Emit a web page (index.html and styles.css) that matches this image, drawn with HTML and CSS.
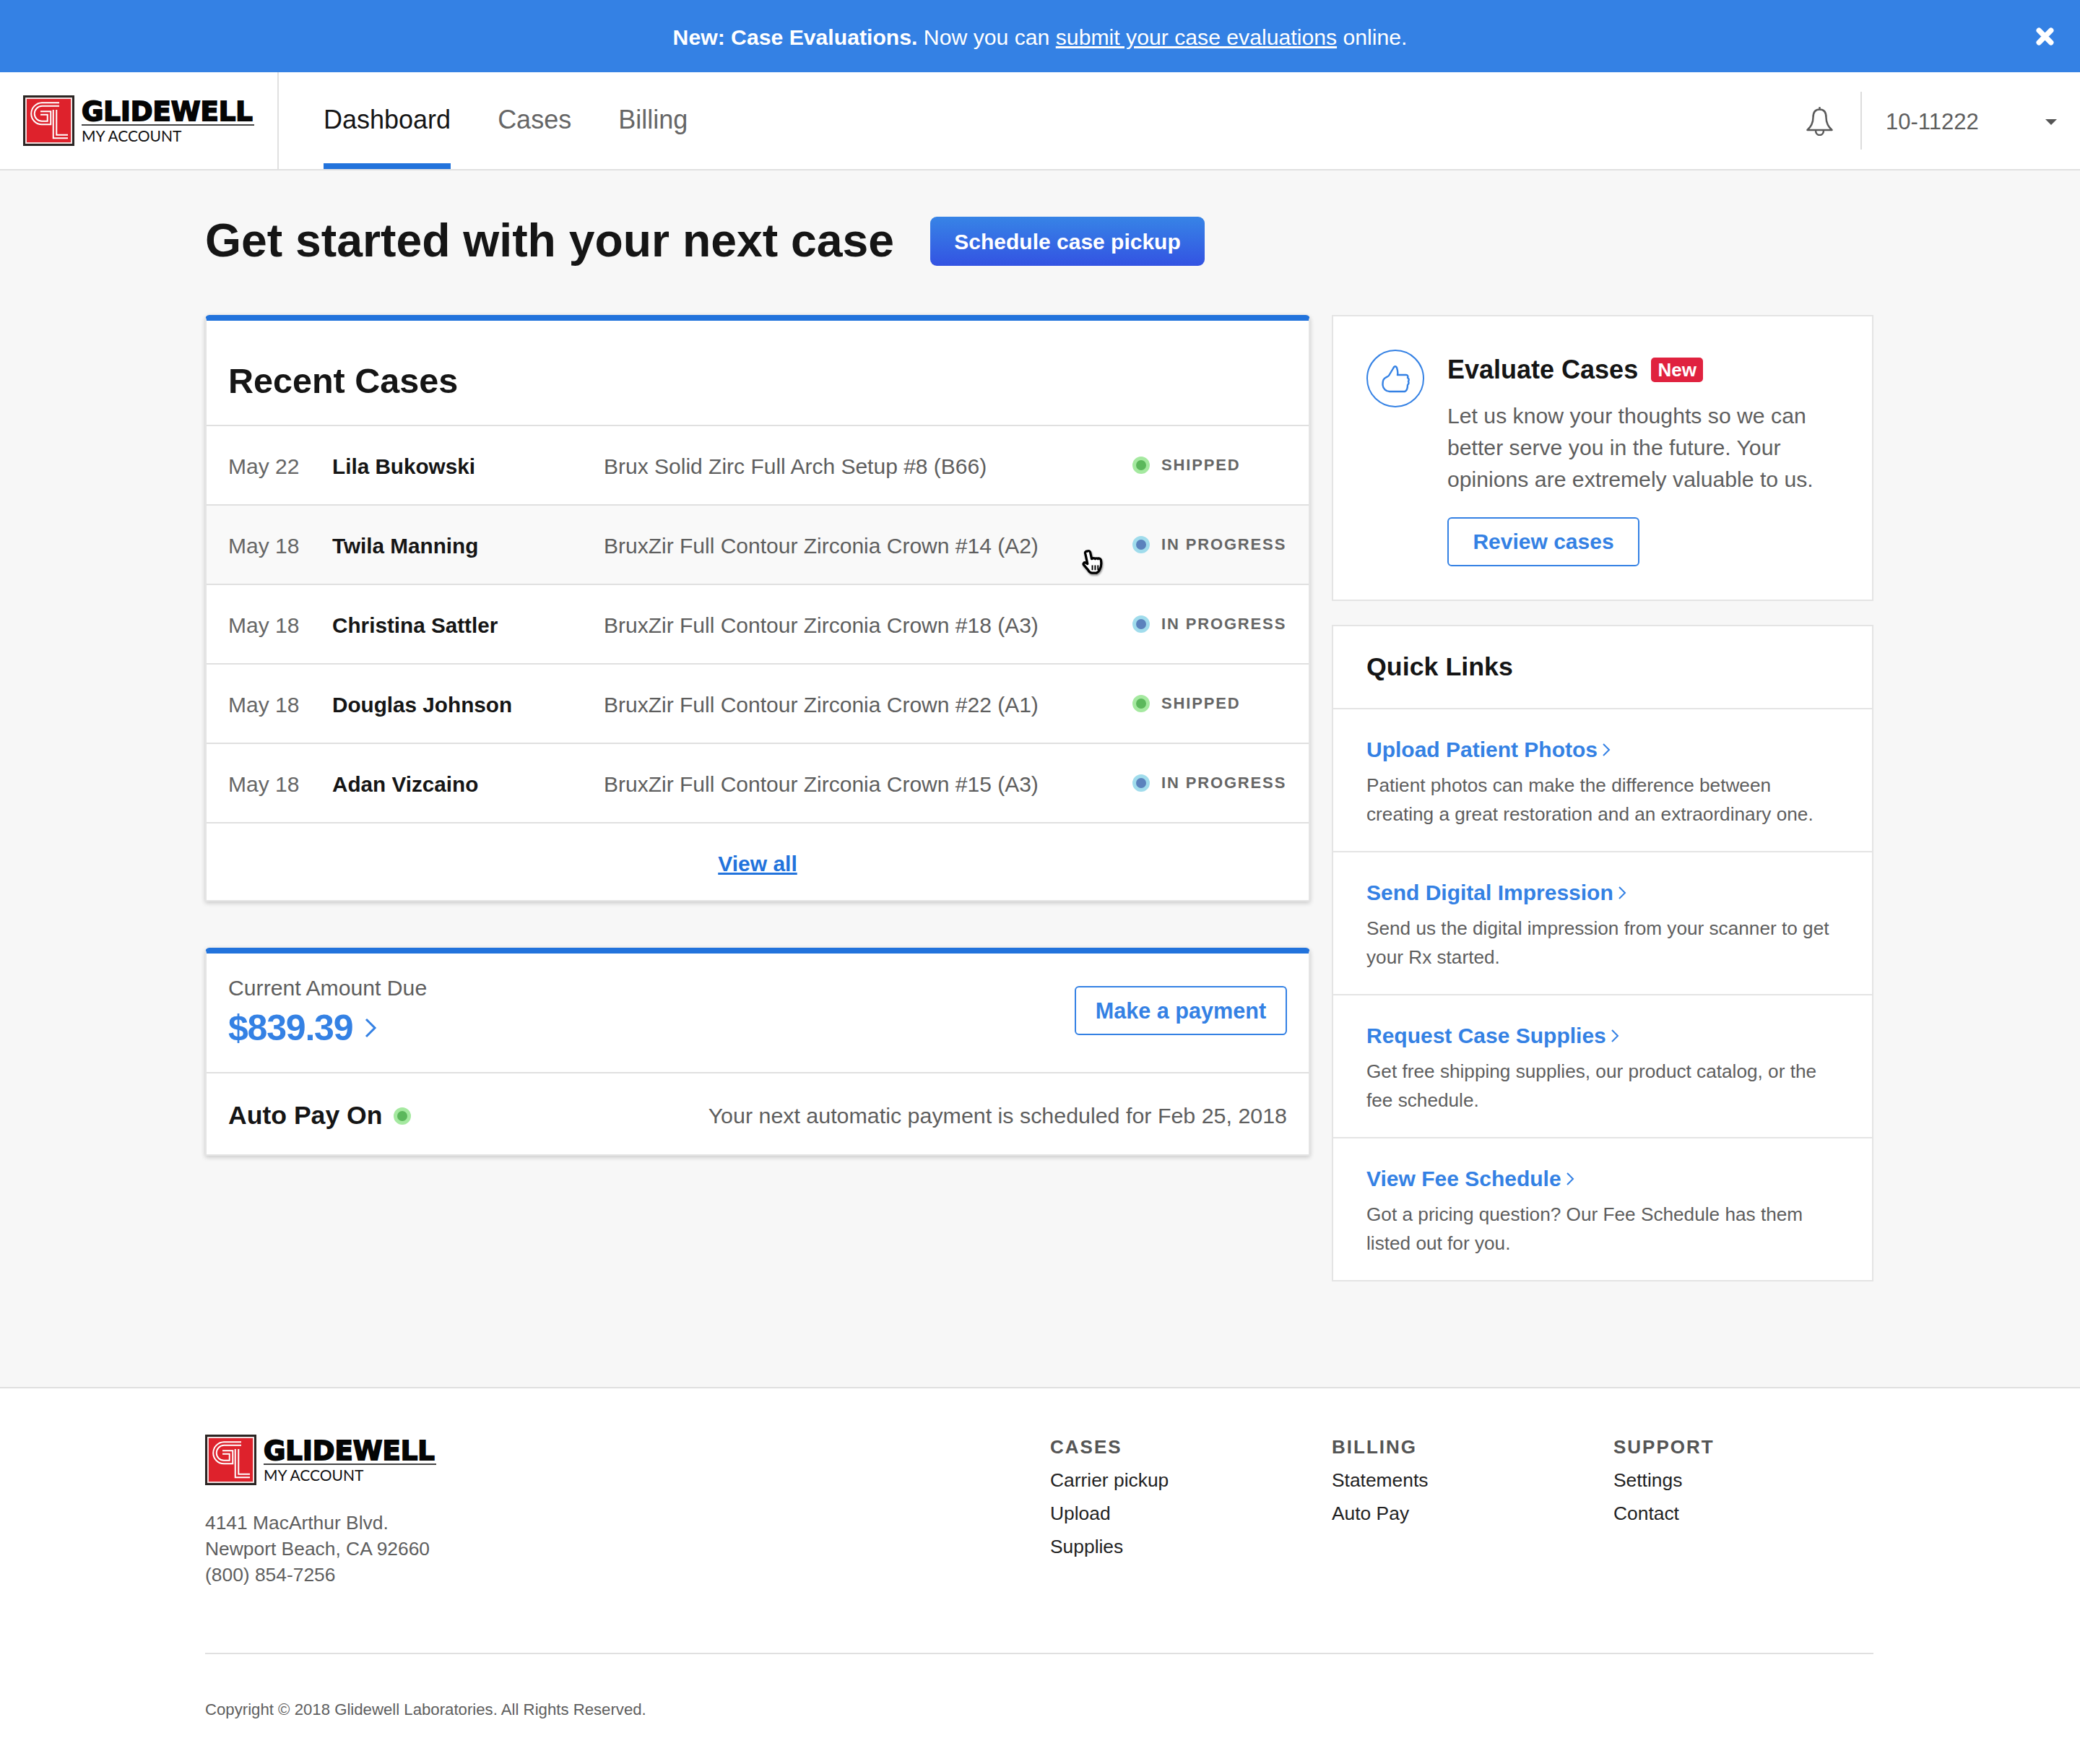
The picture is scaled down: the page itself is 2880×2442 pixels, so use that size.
FILE: index.html
```html
<!DOCTYPE html>
<html lang="en">
<head>
<meta charset="utf-8">
<title>Glidewell My Account</title>
<link rel="stylesheet" href="styles.css">
</head>
<body>
<div class="banner">
  <p class="banner-text"><b>New: Case Evaluations.</b> Now you can <a href="#">submit your case evaluations</a> online.</p>
  <svg class="banner-close" viewBox="0 0 24 24"><path d="M4 4l16 16M20 4L4 20" stroke="#fff" stroke-width="7" stroke-linecap="round"/></svg>
</div>

<header class="nav">
  <div class="nav-logo">
    <svg class="logo" viewBox="0 0 320 70">
      <rect x="0" y="0" width="71" height="70" fill="#2b2523"/>
      <rect x="3" y="3" width="65" height="64" fill="#f3dfdf"/>
      <rect x="5" y="5" width="61" height="60" fill="#de222c"/>
      <path class="gl-outer" d="M50 12.500H26A13 13 0 0 0 13.500 25.500A12.500 12.500 0 0 0 26 38H36V24.500H24"/>
      <path class="gl-inner" d="M50 12.500H26A13 13 0 0 0 13.500 25.500A12.500 12.500 0 0 0 26 38H36V24.500H24"/>
      <path class="gl-outer" d="M44 20V57H62"/>
      <path class="gl-inner" d="M44 20V57H62"/>
      <text class="logo-name" x="81" y="35">GLIDEWELL</text>
      <rect x="81" y="40" width="239" height="2" fill="#444"/>
      <text class="logo-sub" x="81" y="64">MY ACCOUNT</text>
    </svg>
  </div>
  <nav class="tabs">
    <a class="tab tab-active" href="#">Dashboard</a>
    <a class="tab" href="#">Cases</a>
    <a class="tab" href="#">Billing</a>
  </nav>
  <div class="nav-right">
    <svg class="bell" viewBox="0 0 37 40"><path d="M18.500 3.500c-6.500 0-9 4.500-9 11 0 8-3 13-8 17.500h34c-5-4.500-8-9.500-8-17.500 0-6.500-2.500-11-9-11zM18.500 1v2.500M13 32.500c0 4 2.500 6.500 5.500 6.500s5.500-2.500 5.500-6.500" fill="none" stroke="#5a5a5a" stroke-width="2.500" stroke-linejoin="round" stroke-linecap="round"/></svg>
    <div class="account">
      <span class="account-id">10-11222</span>
      <span class="caret"></span>
    </div>
  </div>
</header>

<main class="main">
  <div class="hero">
    <h1 class="hero-title">Get started with your next case</h1>
    <a class="btn-primary" href="#">Schedule case pickup</a>
  </div>
  <div class="columns">
    <div class="col-left">
      <section class="card">
        <h2 class="card-title">Recent Cases</h2>
        <div class="row"><span class="date">May 22</span><span class="name">Lila Bukowski</span><span class="desc">Brux Solid Zirc Full Arch Setup #8 (B66)</span><span class="status"><i class="dot dot-green"></i>SHIPPED</span></div>
        <div class="row row-hover"><span class="date">May 18</span><span class="name">Twila Manning</span><span class="desc">BruxZir Full Contour Zirconia Crown #14 (A2)</span><span class="status"><i class="dot dot-blue"></i>IN PROGRESS</span>
          <svg class="cursor" viewBox="0 0 32 38"><path d="M8 3c2-1 4 0 4 2l2 9 2-1c1 0 2 0 3 1 1-1 3-1 4 0 1-1 3-1 4 1 1 3 1 9-1 13-1 3-3 5-5 6h-6c-3 0-5-2-6-4l-6-7c-2-2 0-5 3-3l2 1-3-14c-1-2 0-4 3-4z" fill="#fff" stroke="#000" stroke-width="3.400" stroke-linejoin="round"/><path d="M15 23v7M19 23v7M23 23v7" stroke="#000" stroke-width="2"/></svg>
        </div>
        <div class="row"><span class="date">May 18</span><span class="name">Christina Sattler</span><span class="desc">BruxZir Full Contour Zirconia Crown #18 (A3)</span><span class="status"><i class="dot dot-blue"></i>IN PROGRESS</span></div>
        <div class="row"><span class="date">May 18</span><span class="name">Douglas Johnson</span><span class="desc">BruxZir Full Contour Zirconia Crown #22 (A1)</span><span class="status"><i class="dot dot-green"></i>SHIPPED</span></div>
        <div class="row"><span class="date">May 18</span><span class="name">Adan Vizcaino</span><span class="desc">BruxZir Full Contour Zirconia Crown #15 (A3)</span><span class="status"><i class="dot dot-blue"></i>IN PROGRESS</span></div>
        <div class="view-all"><a href="#">View all</a></div>
      </section>

      <section class="card card-pay">
        <div class="due">
          <div>
            <div class="due-label">Current Amount Due</div>
            <a class="due-amount" href="#">$839.39<svg class="chev-lg" viewBox="0 0 12 20"><path d="M2 2l8 8-8 8" fill="none" stroke="currentColor" stroke-width="2"/></svg></a>
          </div>
          <a class="btn-outline btn-pay" href="#">Make a payment</a>
        </div>
        <div class="autopay">
          <span class="autopay-label">Auto Pay On<i class="dot dot-green"></i></span>
          <span class="autopay-note">Your next automatic payment is scheduled for Feb 25, 2018</span>
        </div>
      </section>
    </div>

    <aside class="col-right">
      <section class="panel evaluate">
        <div class="thumb-circle">
          <svg class="thumb" viewBox="0 0 40 40"><path d="M3 20C5 17 8 17 10 15L16 5C17 2 20 1 21 4C22 7 23 10 22 14H34C36 14 37 16 36 18C38 19 38 21 37 23C38 25 37 27 36 28C36 31 35 36 32 37H11C6 37 2 33 1.500 28C1.500 25 1.500 22 3 20Z" fill="none" stroke="#3481e4" stroke-width="2.400" stroke-linejoin="round"/></svg>
        </div>
        <div class="evaluate-body">
          <h3 class="evaluate-title">Evaluate Cases<span class="badge">New</span></h3>
          <p class="evaluate-text">Let us know your thoughts so we can better serve you in the future. Your opinions are extremely valuable to us.</p>
          <a class="btn-outline btn-review" href="#">Review cases</a>
        </div>
      </section>

      <section class="panel links">
        <h3 class="links-title">Quick Links</h3>
        <div class="link-item"><a class="link-head" href="#">Upload Patient Photos<svg class="chev-sm" viewBox="0 0 12 20"><path d="M2 2l8 8-8 8" fill="none" stroke="currentColor" stroke-width="2"/></svg></a><p class="link-text">Patient photos can make the difference between creating a great restoration and an extraordinary one.</p></div>
        <div class="link-item"><a class="link-head" href="#">Send Digital Impression<svg class="chev-sm" viewBox="0 0 12 20"><path d="M2 2l8 8-8 8" fill="none" stroke="currentColor" stroke-width="2"/></svg></a><p class="link-text">Send us the digital impression from your scanner to get your Rx started.</p></div>
        <div class="link-item"><a class="link-head" href="#">Request Case Supplies<svg class="chev-sm" viewBox="0 0 12 20"><path d="M2 2l8 8-8 8" fill="none" stroke="currentColor" stroke-width="2"/></svg></a><p class="link-text">Get free shipping supplies, our product catalog, or the fee schedule.</p></div>
        <div class="link-item"><a class="link-head" href="#">View Fee Schedule<svg class="chev-sm" viewBox="0 0 12 20"><path d="M2 2l8 8-8 8" fill="none" stroke="currentColor" stroke-width="2"/></svg></a><p class="link-text">Got a pricing question? Our Fee Schedule has them listed out for you.</p></div>
      </section>
    </aside>
  </div>
</main>

<footer class="footer">
  <div class="footer-inner">
    <div class="footer-top">
      <div class="footer-brand">
        <svg class="logo" viewBox="0 0 320 70">
          <rect x="0" y="0" width="71" height="70" fill="#2b2523"/>
          <rect x="3" y="3" width="65" height="64" fill="#f3dfdf"/>
          <rect x="5" y="5" width="61" height="60" fill="#de222c"/>
          <path class="gl-outer" d="M50 12.500H26A13 13 0 0 0 13.500 25.500A12.500 12.500 0 0 0 26 38H36V24.500H24"/>
          <path class="gl-inner" d="M50 12.500H26A13 13 0 0 0 13.500 25.500A12.500 12.500 0 0 0 26 38H36V24.500H24"/>
          <path class="gl-outer" d="M44 20V57H62"/>
          <path class="gl-inner" d="M44 20V57H62"/>
          <text class="logo-name" x="81" y="35">GLIDEWELL</text>
          <rect x="81" y="40" width="239" height="2" fill="#444"/>
          <text class="logo-sub" x="81" y="64">MY ACCOUNT</text>
        </svg>
        <address class="address">4141 MacArthur Blvd.<br>Newport Beach, CA 92660<br>(800) 854-7256</address>
      </div>
      <div class="footer-col"><h4>CASES</h4><a href="#">Carrier pickup</a><a href="#">Upload</a><a href="#">Supplies</a></div>
      <div class="footer-col"><h4>BILLING</h4><a href="#">Statements</a><a href="#">Auto Pay</a></div>
      <div class="footer-col footer-col-last"><h4>SUPPORT</h4><a href="#">Settings</a><a href="#">Contact</a></div>
    </div>
    <p class="copyright">Copyright © 2018 Glidewell Laboratories. All Rights Reserved.</p>
  </div>
</footer>
</body>
</html>
```

FILE: styles.css
```css
* { box-sizing: border-box; }
html, body { margin: 0; padding: 0; }
body { font-family: "Liberation Sans", Arial, sans-serif; background: #f7f7f7; color: #151515; }
a { text-decoration: none; color: inherit; }
h1, h2, h3, h4, p { margin: 0; }
.logo { width: 320px; height: 70px; display: block; }
.logo-name { font-family: "DejaVu Sans", sans-serif; font-weight: 700; font-size: 37px; fill: #050505; stroke: #050505; stroke-width: 1.8px; }
.logo-sub { font-family: "Lato", sans-serif; font-size: 21px; fill: #111; }
.gl-outer { fill: none; stroke: #fff; stroke-width: 6.5px; }
.gl-inner { fill: none; stroke: #de222c; stroke-width: 2.5px; }

.banner { height: 100px; background: #3481e4; color: #fff; display: flex; align-items: center; justify-content: center; position: relative; font-size: 30.2px; padding-top: 4px; }
.banner-text a { text-decoration: underline; }
.banner-close { position: absolute; right: 36px; top: 38px; width: 25px; height: 25px; }

.nav { height: 136px; background: #fff; border-bottom: 2px solid #e0e0e0; display: flex; }
.nav-logo { width: 386px; border-right: 2px solid #e0e0e0; padding: 32px 0 0 32px; }
.tabs { display: flex; gap: 65px; margin-left: 62px; }
.tab { height: 134px; line-height: 132px; font-size: 36px; color: #666; border-bottom: 8px solid transparent; }
.tab-active { color: #151515; border-bottom-color: #2273dc; }
.nav-right { margin-left: auto; display: flex; align-items: center; height: 134px; }
.bell { width: 37px; height: 40px; margin-right: 38px; margin-top: 2px; }
.account { width: 304px; height: 80px; border-left: 2px solid #dcdcdc; display: flex; align-items: center; padding: 4px 32px 0 33px; justify-content: space-between; font-size: 31px; color: #5e5e5e; }
.caret { width: 0; height: 0; border: 8px solid transparent; border-top: 8px solid #555; border-bottom: 0; }

.main { width: 2310px; margin-left: 284px; padding: 64px 0 146px; }
.hero { display: flex; align-items: center; gap: 50px; height: 68px; }
.hero-title { font-size: 64.3px; font-weight: 700; color: #151515; margin-top: -3px; }
.btn-primary { height: 68px; width: 380px; display: flex; align-items: center; justify-content: center; border-radius: 9px; background: linear-gradient(#3784e6, #3353e2); color: #fff; font-weight: 700; font-size: 30px; padding-top: 2px; }

.columns { display: flex; gap: 30px; margin-top: 68px; align-items: flex-start; }
.col-left { width: 1530px; }
.col-right { width: 750px; }

.card { background: #fff; border: 2px solid #e4e4e4; border-top: 8px solid #2273dc; border-radius: 6px 6px 0 0; box-shadow: 0 2px 6px rgba(0,0,0,.2); }
.card-title { font-size: 48.5px; font-weight: 700; height: 146px; padding: 55px 30px 0; border-bottom: 2px solid #e0e0e0; }
.row { height: 110px; display: flex; align-items: center; padding-left: 30px; font-size: 30px; border-bottom: 2px solid #e0e0e0; position: relative; }
.row-hover { background: #f9f9f9; }
.date { width: 144px; color: #666; margin-top: 3px; }
.name { width: 376px; font-size: 29.7px; font-weight: 700; color: #151515; margin-top: 3px; }
.desc { width: 732px; color: #5e5e5e; margin-top: 3px; }
.status { display: flex; align-items: center; font-size: 22px; font-weight: 700; letter-spacing: 1.85px; color: #666; }
.dot { display: inline-block; width: 24px; height: 24px; border-radius: 50%; border: 5px solid; margin-right: 16px; flex: none; }
.dot-green { background: #5cb85c; border-color: #a5e9a0; }
.dot-blue { background: #5b82bd; border-color: #a0dcec; }
.cursor { position: absolute; left: 1212px; top: 60px; width: 31px; height: 37px; filter: drop-shadow(1px 2px 1px rgba(0,0,0,.4)); }
.view-all { height: 106px; display: flex; align-items: center; justify-content: center; font-size: 30px; font-weight: 700; color: #2273dc; padding-top: 5px; }
.view-all a { text-decoration: underline; }

.card-pay { margin-top: 64px; }
.due { height: 166px; border-bottom: 2px solid #e0e0e0; display: flex; align-items: center; justify-content: space-between; padding: 0 30px; }
.due-label { font-size: 30.2px; color: #5e5e5e; margin-top: -2px; }
.due-amount { display: flex; align-items: center; font-size: 50px; font-weight: 700; color: #3481e4; margin-top: 9px; letter-spacing: -1.2px; }
.chev-lg { width: 18px; height: 30px; margin-left: 16px; }
.btn-outline { display: flex; align-items: center; justify-content: center; border: 2px solid #3481e4; border-radius: 6px; color: #3481e4; font-weight: 700; font-size: 30px; background: #fff; }
.btn-pay { width: 294px; height: 68px; margin-bottom: 6px; font-size: 30.6px; }
.autopay { height: 112px; display: flex; align-items: center; justify-content: space-between; padding: 5px 30px 0; }
.autopay-label { display: flex; align-items: center; font-size: 35.6px; font-weight: 700; }
.autopay-label .dot { margin: 0 0 0 15px; }
.autopay-note { font-size: 30.4px; color: #5e5e5e; }

.panel { background: #fff; border: 2px solid #e4e4e4; }
.evaluate { height: 396px; display: flex; padding: 46px 46px 0; }
.thumb-circle { width: 80px; height: 80px; border: 2px solid #3481e4; border-radius: 50%; display: flex; align-items: center; justify-content: center; flex: none; }
.thumb { width: 40px; height: 40px; margin: 2px 0 0 1px; }
.evaluate-body { margin-left: 32px; }
.evaluate-title { display: flex; align-items: center; font-size: 36px; font-weight: 700; margin-top: 7px; }
.badge { margin-left: 18px; width: 72px; height: 34px; border-radius: 5px; background: #e0223f; color: #fff; font-size: 26px; display: flex; align-items: center; justify-content: center; }
.evaluate-text { font-size: 30.2px; line-height: 44px; color: #5e5e5e; margin-top: 21px; }
.btn-review { width: 266px; height: 68px; margin-top: 30px; }

.links { margin-top: 33px; }
.links-title { height: 115px; font-size: 35.8px; font-weight: 700; padding: 36px 46px 0; border-bottom: 2px solid #e4e4e4; }
.link-item { height: 198px; padding: 39px 46px 0; border-bottom: 2px solid #e4e4e4; }
.link-item:last-child { border-bottom: 0; height: 196px; }
.link-head { display: flex; align-items: center; font-size: 30px; font-weight: 700; color: #3481e4; }
.chev-sm { width: 12px; height: 20px; margin-left: 6px; }
.link-text { font-size: 26.2px; line-height: 40px; color: #5e5e5e; margin-top: 12px; }

.footer { background: #fff; border-top: 2px solid #e0e0e0; height: 522px; }
.footer-inner { width: 2310px; margin-left: 284px; padding-top: 64px; }
.footer-top { display: flex; height: 304px; border-bottom: 2px solid #e0e0e0; }
.footer-brand { width: 1170px; flex: none; }
.address { font-style: normal; font-size: 26.4px; line-height: 36px; color: #5e5e5e; margin-top: 34px; }
.footer-col { width: 390px; flex: none; display: flex; flex-direction: column; font-size: 26.4px; padding-top: 2px; }
.footer-col-last { width: 360px; }
.footer-col h4 { font-size: 26px; font-weight: 700; letter-spacing: 2px; color: #555; margin-bottom: 7px; }
.footer-col a { line-height: 46px; color: #222; }
.copyright { font-size: 22.2px; color: #5e5e5e; margin-top: 64px; }
```
